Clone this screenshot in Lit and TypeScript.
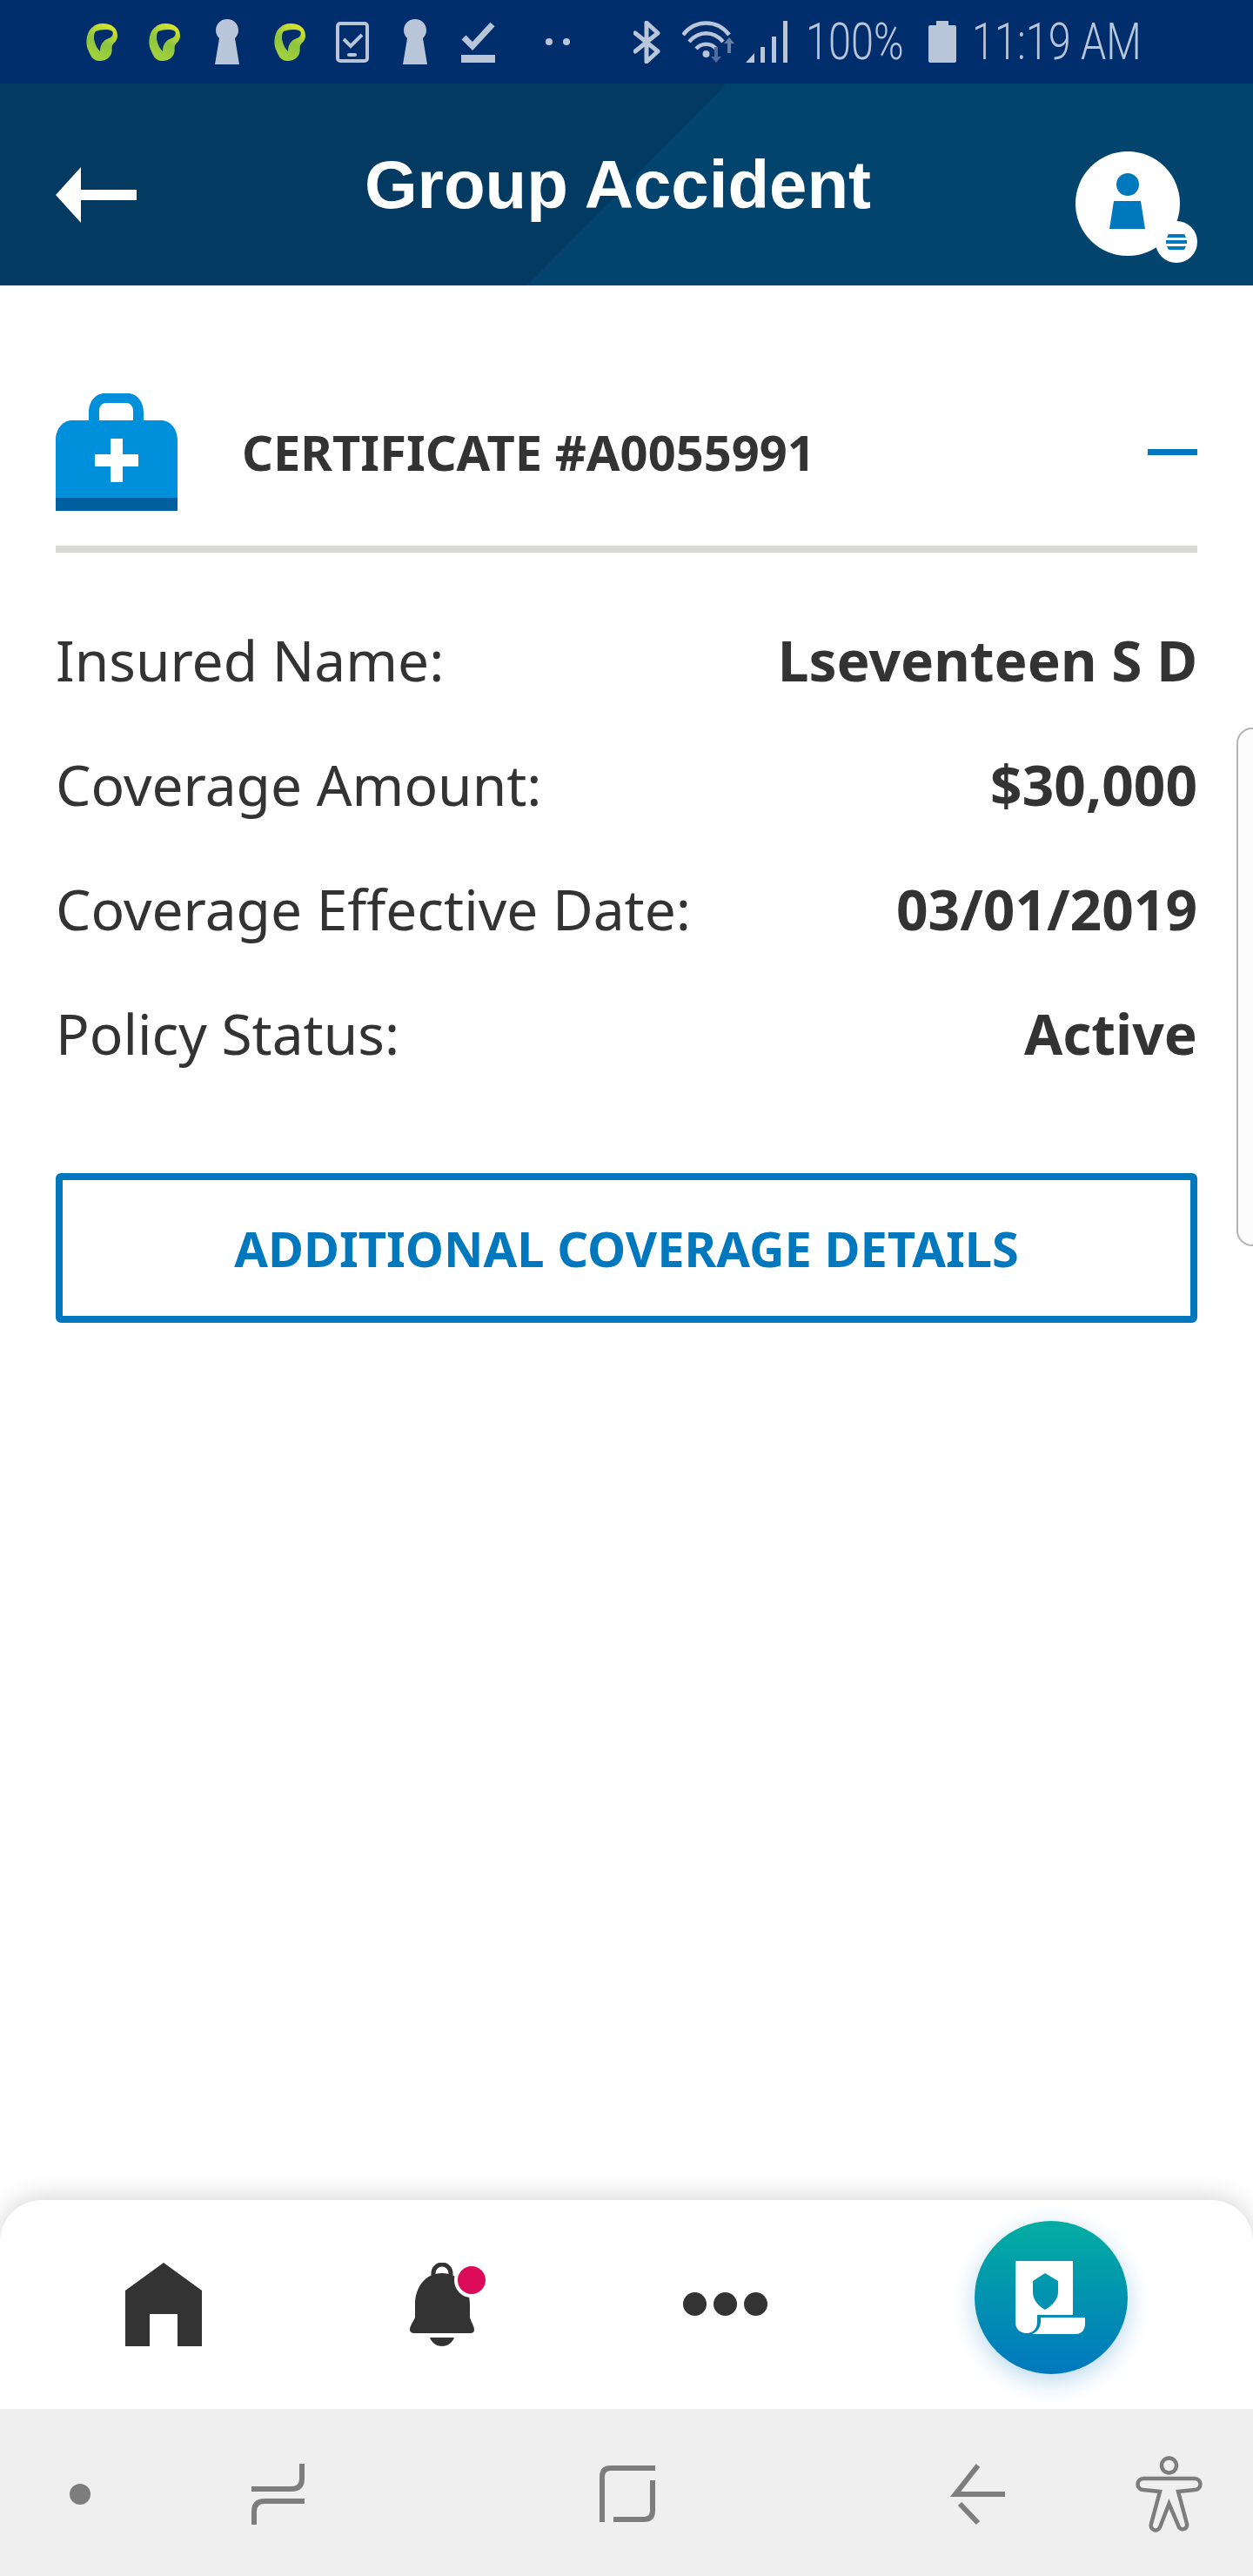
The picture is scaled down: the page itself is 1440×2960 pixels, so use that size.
import { LitElement, css, html, svg } from 'lit';
import { customElement } from 'lit/decorators.js';

const rows = [
    ['Insured Name:', 'Lseventeen S D'],
    ['Coverage Amount:', '$30,000'],
    ['Coverage Effective Date:', '03/01/2019'],
    ['Policy Status:', 'Active'],
];

const BAR = '#002d6b';
const TINT = '#b9c5d8';

const leaf = (id: string) => html`
    <svg width="36" height="43" viewBox="0 0 36 43">
        <defs>
            <linearGradient id=${id} x1="0.7" y1="0" x2="0.3" y2="1">
                <stop offset="0" stop-color="#dde62c"></stop>
                <stop offset="0.5" stop-color="#8dc63f"></stop>
                <stop offset="1" stop-color="#a5d23c"></stop>
            </linearGradient>
        </defs>
        <path fill="url(#${id})" d="M19 0C29 0 36 5 36 14C36 20 32 22 30 25C29 30 31 33 27 38C24 42 19 43 15 43C8 43 5 37 3 32C0 26 0 21 1 15C3 6 10 0 19 0Z"></path>
        <path fill=${BAR} d="M11 9C17 7 26 6 30 9C32 12 30 16 26 17C20 19 16 24 16 32C13 29 10 24 9 18C9 14 9 11 11 9Z"></path>
    </svg>
`;

const keyhole = html`
    <svg width="28" height="52" viewBox="0 0 28 52">
        <path fill=${TINT} d="M14 0C22 0 27 6 27 13C27 17 25 20 23 22L28 52H0L5 22C3 20 1 17 1 13C1 6 6 0 14 0Z"></path>
    </svg>
`;

const phoneCheck = html`
    <svg width="38" height="47" viewBox="0 0 38 47">
        <rect x="2" y="2" width="34" height="43" rx="3" fill="none" stroke=${TINT} stroke-width="4"></rect>
        <path d="M9 20L17 28L30 15" fill="none" stroke=${TINT} stroke-width="4"></path>
        <rect x="13" y="36" width="11" height="4" rx="2" fill=${TINT}></rect>
    </svg>
`;

const downloadCheck = html`
    <svg width="39" height="47" viewBox="0 0 39 47">
        <path d="M3 18L13 28L36 3" fill="none" stroke=${TINT} stroke-width="7"></path>
        <rect y="38" width="39" height="9" fill=${TINT}></rect>
    </svg>
`;

const statusRight = html`
    <svg class="bt" width="32" height="49" viewBox="0 0 32 49">
        <path d="M2 14L28 35L15 47V2L28 14L2 35" fill="none" stroke=${TINT} stroke-width="5" stroke-linejoin="round" stroke-linecap="round"></path>
    </svg>
    <svg class="wifi" width="66" height="48" viewBox="0 0 66 48">
        <g fill="none" stroke=${TINT} stroke-width="4.5">
            <path d="M1 16C15 -2 40 -2 54 16"></path>
            <path d="M8 24C19 11 36 11 47 24"></path>
            <path d="M16 32C22 25 33 25 39 32"></path>
        </g>
        <circle cx="27.5" cy="38" r="4" fill=${TINT}></circle>
        <path d="M37 30H41V41H45L39 48L33 41H37Z" fill="#4f6c9c"></path>
        <path d="M52 37H56V26H60L54 19L48 26H52Z" fill="#6680a8"></path>
    </svg>
    <svg class="signal" width="48" height="48" viewBox="0 0 48 48">
        <path fill=${TINT} d="M0 48L10 37V48ZM17 30H22V48H17ZM30 18H35V48H30ZM43 0H48V48H43Z"></path>
    </svg>
    <span class="st-text pct">100%</span>
    <svg class="batt" width="32" height="48" viewBox="0 0 32 48">
        <path fill=${TINT} d="M9 0H23V5H30Q32 5 32 7V46Q32 48 30 48H2Q0 48 0 46V7Q0 5 2 5H9Z"></path>
    </svg>
    <span class="st-text clock">11:19 AM</span>
`;

const bell = svg`
    <path fill="#333" d="M37 12C18 12 6 28 6 48V63C3 69 0 73 0 77C0 80 3 81 5 81H69C72 81 74 80 74 77C74 73 71 69 69 63V48C69 28 56 12 37 12Z"></path>
    <path fill="none" stroke="#333" stroke-width="5" d="M27 15V12A10 10 0 0 1 47 12V15"></path>
    <path fill="#333" d="M23 86H51C49 92 43 96 37 96C31 96 25 92 23 86Z"></path>
`;

@customElement('app-root')
export class AppRoot extends LitElement {
    static styles = css`
        :host {
            display: flex;
            flex-direction: column;
            position: relative;
            min-height: 2960px;
            background: #fff;
            font-family: 'Noto Sans', 'Open Sans', sans-serif;
            color: #333;
            overflow: hidden;
        }
        svg { display: block; flex: none; }

        .status {
            height: 96px;
            background: ${css([BAR] as unknown as TemplateStringsArray)};
            display: flex;
            align-items: center;
            padding: 0 100px 0 81px;
        }
        .slot { width: 72px; display: flex; justify-content: center; }
        .more { display: flex; gap: 12px; margin-left: 42px; }
        .more i { width: 8px; height: 8px; border-radius: 50%; background: #b9c5d8; }
        .status-right { margin-left: auto; display: flex; align-items: center; }
        .wifi { margin-left: 24px; }
        .signal { margin-left: 7px; }
        .st-text {
            font-family: Roboto, sans-serif;
            font-weight: 300;
            font-size: 60px;
            line-height: 60px;
            color: #b9c5d8;
            white-space: nowrap;
            display: block;
            transform-origin: left center;
            transform: scaleX(0.78);
        }
        .pct { width: 123px; margin-left: 21px; }
        .batt { margin-left: 18px; }
        .clock { width: 223px; margin-left: 18px; }

        .header {
            position: relative;
            height: 232px;
            background: #03446f;
            display: grid;
            grid-template-columns: 1fr auto 1fr;
            padding: 0 84px 0 64px;
            color: #fff;
        }
        .header::before {
            content: '';
            position: absolute;
            inset: 0;
            background: #033a62;
            clip-path: polygon(0 0, 835px 0, 606px 100%, 0 100%);
        }
        .back { position: relative; margin-top: 96px; }
        .title {
            position: relative;
            font-family: 'Liberation Sans', Arial, sans-serif;
            font-weight: 700;
            font-size: 78px;
            line-height: 232px;
            white-space: nowrap;
        }
        .avatar {
            position: relative;
            justify-self: end;
            margin-top: 78px;
            width: 120px;
            height: 120px;
            border-radius: 50%;
            background: #fff;
        }
        .avatar .badge {
            position: absolute;
            left: 92px;
            top: 80px;
            width: 48px;
            height: 48px;
            border-radius: 50%;
            background: #fff;
            display: flex;
            align-items: center;
            justify-content: center;
        }

        main { flex: 1; padding: 124px 64px 0; }
        .cert {
            display: flex;
            align-items: center;
            padding-bottom: 40px;
            border-bottom: 8px solid #d8d8d4;
        }
        .cert h2 {
            margin: 0 0 0 74px;
            font-size: 56px;
            font-weight: 700;
            line-height: 135px;
            white-space: nowrap;
        }
        .minus { margin-left: auto; width: 57px; height: 7px; background: #0078be; }
        .rows { margin-top: 52px; }
        .row {
            display: flex;
            justify-content: space-between;
            align-items: center;
            height: 143px;
            font-size: 64px;
            white-space: nowrap;
        }
        .row b { font-weight: 700; }
        .more-btn {
            margin-top: 89px;
            height: 172px;
            box-sizing: border-box;
            border: 8px solid #0078be;
            border-radius: 6px;
            display: flex;
            align-items: center;
            justify-content: center;
            color: #0078be;
            font-size: 56px;
            font-weight: 700;
            white-space: nowrap;
        }

        .edge {
            position: absolute;
            left: 1421px;
            top: 836px;
            width: 60px;
            height: 596px;
            box-sizing: border-box;
            background: #fcfcfc;
            border: 2px solid #b5b5b5;
            border-radius: 18px;
        }

        .tabs {
            position: relative;
            height: 240px;
            background: #fff;
            border-radius: 48px 48px 0 0;
            box-shadow: 0 -4px 28px rgba(0, 0, 0, 0.16);
            display: flex;
            align-items: flex-start;
        }
        .tab { position: absolute; }
        .home { left: 144px; top: 72px; }
        .bell { left: 471px; top: 72px; }
        .bell i {
            position: absolute;
            left: 51px;
            top: 0;
            width: 32px;
            height: 32px;
            border: 4px solid #fff;
            border-radius: 50%;
            background: #dc0b5a;
        }
        .dots { left: 785px; top: 106px; display: flex; gap: 8px; }
        .dots i { width: 27px; height: 27px; border-radius: 50%; background: #333; }
        .fab {
            left: 1120px;
            top: 24px;
            width: 176px;
            height: 176px;
            border-radius: 50%;
            background: linear-gradient(180deg, #03ada2, #0078be);
            box-shadow: 0 8px 28px rgba(0, 120, 190, 0.28);
        }
        .fab svg { position: absolute; left: 47px; top: 46px; }

        .nav {
            position: relative;
            height: 192px;
            background: #efefef;
        }
        .nav svg { position: absolute; left: 0; top: 0; }
    `;

    render() {
        return html`
            <div class="status">
                <div class="slot">${leaf('l1')}</div>
                <div class="slot">${leaf('l2')}</div>
                <div class="slot">${keyhole}</div>
                <div class="slot">${leaf('l3')}</div>
                <div class="slot">${phoneCheck}</div>
                <div class="slot">${keyhole}</div>
                <div class="slot">${downloadCheck}</div>
                <div class="more"><i></i><i></i></div>
                <div class="status-right">${statusRight}</div>
            </div>

            <header class="header">
                <svg class="back" width="93" height="64" viewBox="0 0 93 64">
                    <path fill="#fff" d="M0 32L29 0V26H93V38H29V64Z"></path>
                </svg>
                <div class="title">Group Accident</div>
                <div class="avatar">
                    <svg width="120" height="120" viewBox="0 0 120 120">
                        <ellipse cx="60" cy="38" rx="13" ry="13" fill="#0078be"></ellipse>
                        <path fill="#0078be" d="M44 57H75L80 89H39Z"></path>
                    </svg>
                    <div class="badge">
                        <svg width="24" height="18" viewBox="0 0 24 18">
                            <path fill="#0078be" d="M3 0H21L23 4H1ZM0 7H24V11H0ZM1 14H23L21 18H3Z"></path>
                        </svg>
                    </div>
                </div>
            </header>

            <main>
                <div class="cert">
                    <svg width="140" height="135" viewBox="0 0 140 135">
                        <path fill="#0090db" d="M38 31V22C38 9 46 0 56 0H83C93 0 101 9 101 22V31H121C132 31 140 41 140 54V120H0V54C0 41 8 31 19 31ZM50 31H89V20C89 15 86 11 81 11H58C53 11 50 15 50 20Z"></path>
                        <rect y="120" width="140" height="15" fill="#0060a0"></rect>
                        <path fill="#fff" d="M63 52H77V70H95V84H77V102H63V84H45V70H63Z"></path>
                    </svg>
                    <h2>CERTIFICATE #A0055991</h2>
                    <div class="minus"></div>
                </div>
                <div class="rows">
                    ${rows.map(([label, value]) => html`<div class="row"><span>${label}</span><b>${value}</b></div>`)}
                </div>
                <div class="more-btn">ADDITIONAL COVERAGE DETAILS</div>
            </main>

            <div class="edge"></div>

            <div class="tabs">
                <svg class="tab home" width="88" height="96" viewBox="0 0 88 96">
                    <path fill="#333" d="M44 0L88 32V96H60V59H28V96H0V32Z"></path>
                </svg>
                <div class="tab bell">
                    <svg width="74" height="96" viewBox="0 0 74 96">${bell}</svg>
                    <i></i>
                </div>
                <div class="tab dots"><i></i><i></i><i></i></div>
                <div class="tab fab">
                    <svg width="80" height="84" viewBox="0 0 80 84">
                        <path fill="#fff" fill-rule="evenodd" d="M0 0H66V62H25V70C25 78 20 83 13 83C5 83 0 78 0 70ZM34 14L20 23V36C20 44 26 52 34 56C42 52 49 44 49 36V23Z"></path>
                        <path fill="#fff" d="M29 65H80V72C80 79 76 84 70 84H19C25 82 29 76 29 70Z"></path>
                    </svg>
                </div>
            </div>

            <div class="nav">
                <svg width="1440" height="192" viewBox="0 0 1440 192">
                    <circle cx="92" cy="98" r="12" fill="#7d7d7d"></circle>
                    <g fill="none" stroke="#7d7d7d" stroke-width="6">
                        <path d="M347 63V80Q347 92 335 92H289"></path>
                        <path d="M350 106H304Q292 106 292 118V133"></path>
                        <path d="M692 130V78Q692 68 702 68H753"></path>
                        <path d="M750 82V117Q750 127 740 127H705"></path>
                        <path d="M1124 65L1098 98H1155"></path>
                        <path d="M1103 109L1124 131"></path>
                    </g>
                    <g transform="translate(1307 54)" fill="none" stroke="#7d7d7d" stroke-width="4.5">
                        <circle cx="36.5" cy="11" r="8.5"></circle>
                        <path d="M7 26H66A6.5 6.5 0 0 1 66 39L47 41L57 78A5 5 0 0 1 48 82L36.5 55L26 82A5 5 0 0 1 16 78L26 41L7 39A6.5 6.5 0 0 1 7 26Z"></path>
                    </g>
                </svg>
            </div>
        `;
    }
}
